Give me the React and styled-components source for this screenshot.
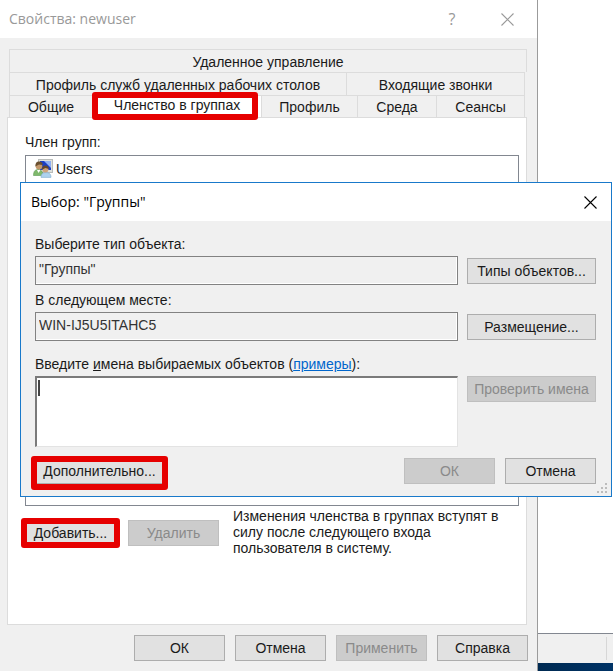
import React, { useState } from 'react';
import styled, { createGlobalStyle, css } from 'styled-components';

const GlobalStyle = createGlobalStyle`
  * {
    box-sizing: border-box;
  }

  body {
    margin: 0;
    background: #fff;
    color: #1a1a1a;
    font-family: "Liberation Sans", Arial, sans-serif;
    font-size: 14px;
    line-height: 16px;
  }

  button, input, textarea {
    font: inherit;
    color: inherit;
  }
`;

const tabRows = [
    [{ id: 'remote', label: 'Удаленное управление', size: 1 }],
    [
        { id: 'rds', label: 'Профиль служб удаленных рабочих столов', size: 338 },
        { id: 'dialin', label: 'Входящие звонки', size: 178 },
    ],
    [
        { id: 'general', label: 'Общие', size: 83 },
        { id: 'member', label: 'Членство в группах', size: 170 },
        { id: 'profile', label: 'Профиль', size: 96 },
        { id: 'env', label: 'Среда', size: 79 },
        { id: 'sessions', label: 'Сеансы', size: 88 },
    ],
];

const CloseIcon = () => (
    <svg width="13" height="13" viewBox="0 0 13 13" aria-hidden="true">
        <path d="M0.5 0.5l12 12M12.5 0.5l-12 12" fill="none" stroke="currentColor" strokeWidth="1.1" />
    </svg>
);

const GroupIcon = () => (
    <svg width="20" height="19" viewBox="0 0 20 19" aria-hidden="true">
        <rect x="5.5" y="0.5" width="14" height="13" fill="#dfe1dd" stroke="#b9bcba" />
        <rect x="7" y="2" width="11" height="9" fill="#1c3fc4" />
        <path d="M11 2h7v7z" fill="#8fb0f2" />
        <path d="M0.5 16.5c0-4 1.5-6 4.5-6s5 2 5 6z" fill="#7fb96c" stroke="#5b9850" strokeWidth="0.6" />
        <circle cx="6" cy="7.2" r="3.3" fill="#c3986c" />
        <path d="M2.4 7.4c0-3.8 1.8-5 4-4.8 2 0 3.4 1.4 3.4 3.4L6 5.4z" fill="#6b5030" />
        <path d="M4 11l1.6 3 1.8-3z" fill="#fff" />
        <path d="M8 18.4c0-3.6 2-4.8 5-4.8s5 1.2 5 4.8z" fill="#add2ee" stroke="#7fadd0" strokeWidth="0.6" />
        <circle cx="12.4" cy="10.6" r="3" fill="#d0a47c" />
        <path d="M9 10.8c-.2-3.2 1.2-4.4 3.4-4.4s3.4 1.2 3.4 3.5l-3.4-1z" fill="#65482a" />
    </svg>
);

const SizeGrip = () => (
    <Grip width="11" height="11" viewBox="0 0 11 11" aria-hidden="true">
        <path
            d="M8 0h2v2h-2zM4 4h2v2h-2zM8 4h2v2h-2zM0 8h2v2h-2zM4 8h2v2h-2zM8 8h2v2h-2z"
            fill="#bcbcbc"
        />
    </Grip>
);

const App = () => {
    const [activeTab, setActiveTab] = useState('member');
    const [names, setNames] = useState('');

    return (
        <Desktop>
            <GlobalStyle />

            <PropertiesWindow>
                <TitleBar $inactive>
                    <Title>Свойства: newuser</Title>
                    <TitleButton $narrow aria-label="Справка по окну">?</TitleButton>
                    <TitleButton $wide aria-label="Закрыть"><CloseIcon /></TitleButton>
                </TitleBar>

                <Tabs role="tablist">
                    {tabRows.map((row, i) => (
                        <TabRow key={i} $inset={i > 0}>
                            {row.map(tab => (
                                <Tab
                                    key={tab.id}
                                    role="tab"
                                    aria-selected={activeTab === tab.id}
                                    $active={activeTab === tab.id}
                                    $size={tab.size}
                                    onClick={() => setActiveTab(tab.id)}
                                >
                                    {tab.label}
                                </Tab>
                            ))}
                        </TabRow>
                    ))}
                </Tabs>

                <TabPanel role="tabpanel">
                    <ListCaption id="member-of">Член групп:</ListCaption>
                    <GroupList aria-labelledby="member-of">
                        <GroupItem><GroupIcon />Users</GroupItem>
                    </GroupList>
                    <MemberActions>
                        <Marked $inset="-2px -4px">
                            <Button>Добавить...</Button>
                        </Marked>
                        <Button disabled>Удалить</Button>
                        <Note>
                            Изменения членства в группах вступят в силу после следующего входа
                            пользователя в систему.
                        </Note>
                    </MemberActions>
                </TabPanel>

                <WindowActions>
                    <Button>ОК</Button>
                    <Button>Отмена</Button>
                    <Button disabled>Применить</Button>
                    <Button>Справка</Button>
                </WindowActions>
            </PropertiesWindow>

            <Console>
                <StatusBar />
                <Wallpaper />
            </Console>

            <Dialog role="dialog" aria-labelledby="dialog-title">
                <TitleBar>
                    <Title id="dialog-title">Выбор: "Группы"</Title>
                    <TitleButton aria-label="Закрыть"><CloseIcon /></TitleButton>
                </TitleBar>
                <DialogBody>
                    <FieldGroup>
                        <label htmlFor="object-type">Выберите тип объекта:</label>
                        <FieldRow>
                            <ReadOnlyField id="object-type" readOnly value={'"Группы"'} />
                            <Button $wide>Типы объектов...</Button>
                        </FieldRow>
                    </FieldGroup>
                    <FieldGroup>
                        <label htmlFor="location">В следующем месте:</label>
                        <FieldRow>
                            <ReadOnlyField id="location" readOnly value="WIN-IJ5U5ITAHC5" />
                            <Button $wide>Размещение...</Button>
                        </FieldRow>
                    </FieldGroup>
                    <FieldGroup $spaced>
                        <div>
                            <label htmlFor="names">Введите <u>и</u>мена выбираемых объектов</label>
                            {' ('}<Link href="#examples">примеры</Link>):
                        </div>
                        <FieldRow $top>
                            <NamesBox $empty={names === ''}>
                                <textarea
                                    id="names"
                                    value={names}
                                    onChange={e => setNames(e.target.value)}
                                />
                            </NamesBox>
                            <Button $wide disabled>Проверить имена</Button>
                        </FieldRow>
                    </FieldGroup>
                    <DialogActions>
                        <Marked $inset="-2px -4px -6px" $first>
                            <Button $wide>Дополнительно...</Button>
                        </Marked>
                        <Button disabled>ОК</Button>
                        <Button>Отмена</Button>
                    </DialogActions>
                </DialogBody>
                <SizeGrip />
            </Dialog>
        </Desktop>
    );
};

const markerFrame = css`
  content: "";
  position: absolute;
  border: 6px solid #e60000;
  border-radius: 3px;
  pointer-events: none;
`;

const Desktop = styled.div`
  position: relative;
  display: flex;
  min-height: 100vh;
`;

const PropertiesWindow = styled.section`
  flex: 1;
  display: flex;
  flex-direction: column;
  background: #f0f0f0;
  border-right: 1px solid #9b9b9b;
`;

const TitleBar = styled.header`
  display: flex;
  align-items: center;
  height: 38px;
  padding-left: ${p => (p.$inactive ? '9px' : '10px')};
  background: #fff;
  color: ${p => (p.$inactive ? '#999' : '#000')};
`;

const Title = styled.h1`
  flex: 1;
  margin: 0;
  font-family: "Open Sans", "Noto Sans", sans-serif;
  font-size: 14px;
  font-weight: 400;
  line-height: 20px;
`;

const TitleButton = styled.button`
  display: flex;
  align-items: center;
  justify-content: center;
  width: ${p => (p.$wide ? '60px' : '42px')};
  height: 36px;
  padding: 0;
  border: none;
  background: none;
  font-family: "Open Sans", sans-serif;
  font-size: 16px;

  ${p => p.$narrow && css`
    width: 50px;
  `}
`;

const Tabs = styled.div`
  margin: 11px 10px 0 9px;
`;

const TabRow = styled.div`
  display: flex;
  height: 23px;
  margin-right: ${p => (p.$inset ? '2px' : '0')};
  border-left: 1px solid #dcdcdc;

  &:last-child {
    height: 22px;
  }
`;

const Tab = styled.button`
  position: relative;
  flex: ${p => p.$size} 1 0;
  min-width: 0;
  padding: 1px 0 0;
  border: solid #dcdcdc;
  border-width: 1px 1px 0 0;
  background: #f0f0f0;
  white-space: nowrap;

  ${p => p.$active && css`
    padding: 0 0 4px;
    background: #fff;

    &::after {
      ${markerFrame}
      inset: -4px 3px -3px -1px;
    }
  `}
`;

const TabPanel = styled.div`
  flex: 1;
  display: flex;
  flex-direction: column;
  margin: 0 10px 0 7px;
  padding: 16px 7px 66px 17px;
  border: 1px solid #dcdcdc;
  background: #fff;
`;

const ListCaption = styled.div`
  margin-bottom: 5px;
`;

const GroupList = styled.ul`
  flex: 1;
  min-height: 120px;
  margin: 0;
  padding: 3px 7px;
  border: 1px solid #828790;
  list-style: none;
`;

const GroupItem = styled.li`
  display: flex;
  align-items: center;
  gap: 3px;
`;

const MemberActions = styled.div`
  display: flex;
  align-items: center;
  gap: 12px;
  padding-top: 2px;
`;

const Note = styled.p`
  flex: 1;
  margin: 0;
  padding: 0 8px 2px 2px;
`;

const Marked = styled.span`
  position: relative;
  display: flex;
  margin-right: ${p => (p.$first ? 'auto' : '0')};

  &::after {
    ${markerFrame}
    inset: ${p => p.$inset};
  }
`;

const Button = styled.button`
  flex: none;
  width: ${p => (p.$wide ? '129px' : '91px')};
  height: 26px;
  padding: 0;
  border: 1px solid #adadad;
  background: #e1e1e1;
  white-space: nowrap;

  &:disabled {
    border-color: #bfbfbf;
    background: #ccc;
    color: #8a8a8a;
  }
`;

const WindowActions = styled.div`
  display: flex;
  justify-content: flex-end;
  gap: 10px;
  padding: 10px 9px;
`;

const Console = styled.aside`
  display: flex;
  flex-direction: column;
  justify-content: flex-end;
  width: 75px;
`;

const StatusBar = styled.div`
  height: 30px;
  padding: 3px 6px 3px 0;
  border-top: 1px solid #828790;
  background: #f0f0f0;

  &::before {
    content: "";
    display: block;
    height: 100%;
    border-right: 1px solid #d7d7d7;
  }
`;

const Wallpaper = styled.div`
  height: 8px;
  background: linear-gradient(90deg, #002a52, #003366);
`;

const Dialog = styled.section`
  position: absolute;
  top: 182px;
  left: 20px;
  right: 1px;
  border: 1px solid #1979ca;
  background: #f0f0f0;
`;

const DialogBody = styled.div`
  display: flex;
  flex-direction: column;
  gap: 7px;
  padding: 15px 15px 12px 14px;
`;

const FieldGroup = styled.div`
  display: flex;
  flex-direction: column;
  gap: 4px;
  padding-top: ${p => (p.$spaced ? '8px' : '0')};
`;

const FieldRow = styled.div`
  display: flex;
  align-items: ${p => (p.$top ? 'flex-start' : 'center')};
  gap: 9px;
`;

const ReadOnlyField = styled.input`
  flex: 1;
  min-width: 0;
  height: 29px;
  padding: 0 3px 3px;
  border: 1px solid #828282;
  box-shadow: inset -1px -1px #fff;
  background: #f0f0f0;
  color: #333;
  outline: none;
`;

const NamesBox = styled.div`
  position: relative;
  flex: 1;

  textarea {
    display: block;
    width: 100%;
    height: 71px;
    padding: 2px;
    border: solid;
    border-width: 2px 1px 1px 2px;
    border-color: #7a7a7a #e3e3e3 #e3e3e3 #7a7a7a;
    background: #fff;
    outline: none;
    resize: none;
  }

  /* text caret of the focused box */
  &::before {
    content: "";
    display: ${p => (p.$empty ? 'block' : 'none')};
    position: absolute;
    top: 4px;
    left: 3px;
    width: 2px;
    height: 16px;
    background: #444;
    pointer-events: none;
  }
`;

const Link = styled.a`
  color: #0066cc;
  text-decoration: underline;
`;

const DialogActions = styled.div`
  display: flex;
  gap: 10px;
  padding-top: 4px;
`;

const Grip = styled.svg`
  position: absolute;
  right: 3px;
  bottom: 2px;
`;

export default App;
